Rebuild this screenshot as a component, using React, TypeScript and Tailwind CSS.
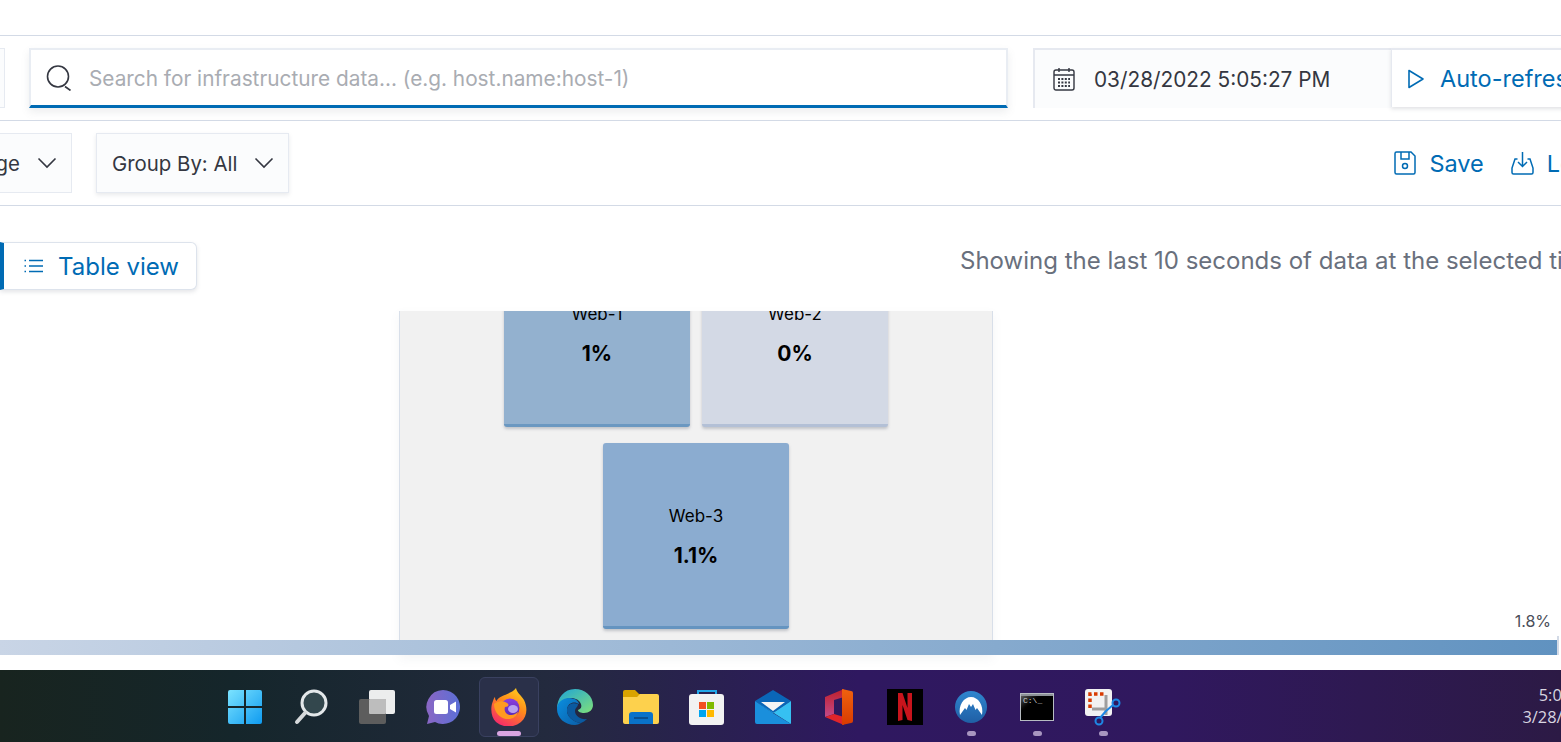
import type { ReactNode } from "react";

const Chevron = () => (
  <svg width="20" height="12" viewBox="0 0 20 12" fill="none" stroke="#343741" strokeWidth="1.6">
    <path d="M1.5 1.5 10 10l8.5-8.5" />
  </svg>
);

function Dropdown({ children }: { children: ReactNode }) {
  return (
    <div className="flex h-[60px] shrink-0 items-center gap-[17px] border border-[#e6eaf1] bg-[#fbfcfd] pr-[14px] text-[20.4px] text-[#343741] shadow-[0_2px_4px_rgba(105,112,125,0.15)]">
      {children}
      <Chevron />
    </div>
  );
}

function SearchBar() {
  return (
    <div className="flex h-[60px] w-[979px] items-center border-x-2 border-t-2 border-b-[3px] border-x-[#e9edf3] border-t-[#e9edf3] border-b-[#006bb4] bg-white pl-[15px] shadow-[0_4px_8px_rgba(105,112,125,0.12)]">
      <svg width="27" height="26" viewBox="0 0 27 26" fill="none" stroke="#343741" strokeWidth="1.6">
        <circle cx="12" cy="11.5" r="10.500" />
        <path d="M19 21.500l5.500 4" />
      </svg>
      <span className="ml-[16px] pt-[3px] text-[20.8px] whitespace-nowrap text-[#a9acb2]">
        Search for infrastructure data... (e.g. host.name:host-1)
      </span>
    </div>
  );
}

function DatePicker() {
  return (
    <div className="flex h-[60px] shrink-0">
      <div className="flex w-[358px] shrink-0 items-center border-t-2 border-l-2 border-[#e6e9f0] bg-[#fbfcfd] pl-[18px]">
        <svg width="22" height="24" viewBox="0 0 22 24" fill="none" stroke="#343741" strokeWidth="1.4">
          <rect x="1" y="3" width="20" height="20" rx="2" />
          <path d="M1 8h20M6 1v4M16 1v4" />
          <path strokeWidth="2" strokeDasharray="2 1.4" d="M5 12h12M5 15.5h12M5 19h12" />
        </svg>
        <span className="ml-[19px] pt-[2px] text-[20.8px] whitespace-nowrap text-[#343741]">03/28/2022 5:05:27 PM</span>
      </div>
      <div className="flex h-[59px] w-[200px] shrink-0 items-center border-t-2 border-l border-[#e6e9f0] bg-white pl-[15px] shadow-[0_2px_4px_rgba(105,112,125,0.2)]">
        <svg width="18" height="20" viewBox="0 0 18 20" fill="none" stroke="#006bb4" strokeWidth="1.6">
          <path d="M2 1.5v17L16 10z" strokeLinejoin="round" />
        </svg>
        <span className="ml-[15px] text-[23.500px] whitespace-nowrap text-[#006bb4]">Auto-refresh</span>
      </div>
    </div>
  );
}

function Toolbar() {
  return (
    <div className="flex h-[85px] items-center border-b border-[#d3dae6]">
      <div className="flex w-[72px] shrink-0 justify-end overflow-hidden">
        <Dropdown>
          <span className="pt-[2px] whitespace-nowrap">Metric: CPU usage</span>
        </Dropdown>
      </div>
      <div className="ml-[24px] shrink-0">
        <Dropdown>
          <span className="ml-[15px] pt-[2px] whitespace-nowrap">Group By: All</span>
        </Dropdown>
      </div>
      <div className="ml-[1105px] flex shrink-0 items-center text-[23.500px] text-[#006bb4]">
        <svg width="22" height="24" viewBox="0 0 22 24" fill="none" stroke="#006bb4" strokeWidth="1.5">
          <path d="M1 2.5A1.5 1.5 0 0 1 2.500 1H17l4 4v16.500a1.500 1.500 0 0 1-1.500 1.500h-17A1.500 1.500 0 0 1 1 21.500z" />
          <path d="M7 1v7h8V1" />
          <circle cx="11" cy="15" r="2.500" />
        </svg>
        <span className="ml-[13px] pt-[2px]">Save</span>
        <svg className="ml-[27px]" width="23" height="24" viewBox="0 0 23 24" fill="none" stroke="#006bb4" strokeWidth="1.5">
          <path d="M6.500 8H4L1 17v4.500A1.500 1.500 0 0 0 2.500 23h18a1.500 1.500 0 0 0 1.500-1.500V17l-3-9h-2.500" />
          <path d="M11.500 1v14M7 11l4.500 4.500L16 11" />
        </svg>
        <span className="ml-[13px] pt-[2px]">Load</span>
      </div>
    </div>
  );
}

function ViewRow() {
  return (
    <div className="flex h-[105px] items-start bg-white pt-[36px]">
      <div className="flex h-[48px] w-[197px] shrink-0 items-center rounded-r-[6px] border-y border-r border-[#dde3ec] border-l-[4px] border-l-[#006bb4] bg-white pl-[20px] shadow-[0_2px_4px_rgba(105,112,125,0.18)]">
        <svg width="20" height="16" viewBox="0 0 20 16" fill="none" stroke="#006bb4" strokeWidth="1.300">
          <path d="M5 2.500h14M5 8h14M5 13.500h14" />
          <path d="M0.500 2.500h1.500M0.500 8h1.500M0.500 13.500h1.500" />
        </svg>
        <span className="ml-[14px] pt-[1px] text-[24px] whitespace-nowrap text-[#006bb4]">Table view</span>
      </div>
      <span className="ml-[763px] pt-[1px] text-[24px] leading-[36px] whitespace-nowrap text-[#69707d]">
        Showing the last 10 seconds of data at the selected time
      </span>
    </div>
  );
}

function Tile({ name, value, bg, edge }: { name: string; value: string; bg: string; edge: string }) {
  return (
    <div className={`flex h-[186px] w-[186px] flex-col items-center rounded-[3px] border-b-[3px] pt-[62px] text-black shadow-[0_2px_3px_rgba(105,112,125,0.35)] ${bg} ${edge}`}>
      <span className="text-[17px] leading-[22px]">{name}</span>
      <span className="mt-[16px] text-[21px] leading-[26px] font-bold">{value}</span>
    </div>
  );
}

function WaffleMap() {
  return (
    <div className="relative flex h-[359px] bg-white">
      <div className="ml-[399px] h-[344px] w-[594px] shrink-0 overflow-hidden border-x border-[#d8dfe9] bg-[#f1f1f1] shadow-[0_4px_10px_rgba(105,112,125,0.07)]">
        <div className="mx-auto -mt-[70px] flex w-[400px] flex-wrap justify-center gap-x-[12px] gap-y-[16px]">
          <Tile name="Web-1" value="1%" bg="bg-[#93b1cf]" edge="border-[#6b98c1]" />
          <Tile name="Web-2" value="0%" bg="bg-[#d3d9e5]" edge="border-[#b3c0d6]" />
          <Tile name="Web-3" value="1.1%" bg="bg-[#8bacd0]" edge="border-[#6594c0]" />
        </div>
      </div>
      {/* legend sits on top of the panel */}
      <span className="absolute top-[300px] right-[10px] text-[16px] leading-[20px] text-[#4a4e59]">1.8%</span>
      <div className="absolute top-[329px] left-0 h-[15px] w-[1557px] bg-gradient-to-r from-[#c9d5e6] to-[#6092c0]" />
      <div className="absolute top-[325px] left-[1557px] h-[19px] w-[2px] bg-[#d3dae6]" />
    </div>
  );
}

function TaskIcon({ children, active, dot }: { children: ReactNode; active?: boolean; dot?: boolean }) {
  return (
    <div className="relative flex h-[72px] w-[66px] shrink-0 items-center justify-center pt-[2px]">
      {active && (
        <div className="absolute top-[7px] left-[3px] h-[60px] w-[60px] rounded-[6px] border border-[#3a4160] bg-[#2a3049]" />
      )}
      <div className="relative flex">{children}</div>
      {active && <div className="absolute top-[61px] left-[21px] h-[5px] w-[24px] rounded-full bg-[#d9a5e2]" />}
      {dot && <div className="absolute top-[61px] left-[29px] h-[5px] w-[9px] rounded-full bg-[#a896c0]" />}
    </div>
  );
}

const WindowsIcon = () => (
  <svg width="36" height="36" viewBox="0 0 36 36">
    <defs>
      <linearGradient id="win" x1="0" y1="0" x2="1" y2="1">
        <stop offset="0" stopColor="#7be3ff" />
        <stop offset="1" stopColor="#0f9bf0" />
      </linearGradient>
    </defs>
    <path fill="url(#win)" d="M1 3a2 2 0 0 1 2-2h14v16H1zM19 1h14a2 2 0 0 1 2 2v14H19zM1 19h16v16H3a2 2 0 0 1-2-2zM19 19h16v14a2 2 0 0 1-2 2H19z" />
  </svg>
);

const SearchIcon = () => (
  <svg width="34" height="36" viewBox="0 0 34 36" fill="none">
    <circle cx="20" cy="14" r="12" fill="#33474d" stroke="#e4e8ea" strokeWidth="3" />
    <path d="M11 24 3 33" stroke="#d6d9db" strokeWidth="4" strokeLinecap="round" />
  </svg>
);

const TaskViewIcon = () => (
  <svg width="36" height="34" viewBox="0 0 36 34">
    <rect x="10" y="0" width="26" height="24" rx="2" fill="#eceded" />
    <rect x="0" y="9" width="27" height="25" rx="2" fill="#5d5d5d" />
    <rect x="10" y="9" width="17" height="15" rx="1" fill="#bdbdbd" />
  </svg>
);

const ChatIcon = () => (
  <svg width="36" height="36" viewBox="0 0 36 36">
    <defs>
      <linearGradient id="chat" x1="0" y1="0" x2="1" y2="0">
        <stop offset="0" stopColor="#8a66c4" />
        <stop offset="1" stopColor="#5b6fd6" />
      </linearGradient>
    </defs>
    <path fill="url(#chat)" d="M18 1a17 17 0 1 1-8 32l-8 2 2-8A17 17 0 0 1 18 1z" />
    <rect x="9" y="11" width="14" height="14" rx="2.500" fill="#fff" />
    <path fill="#fff" d="M25 16l6-3.500v11L25 20z" />
  </svg>
);

const FirefoxIcon = () => (
  <svg width="36" height="38" viewBox="0 0 36 38">
    <defs>
      <linearGradient id="fx" x1="0.85" y1="0" x2="0.3" y2="1">
        <stop offset="0" stopColor="#ffd21f" />
        <stop offset="0.45" stopColor="#ff8a1a" />
        <stop offset="1" stopColor="#f52a6a" />
      </linearGradient>
      <linearGradient id="fxGlobe" x1="0.5" y1="0" x2="0.5" y2="1">
        <stop offset="0" stopColor="#8a3fe0" />
        <stop offset="1" stopColor="#5a28b0" />
      </linearGradient>
    </defs>
    <path fill="url(#fx)" d="M25 0c1 5 5 7 8 12 4 8 3 17-3 22-7 6-18 6-25 0C0 29-1 20 2 13c.5-1.500 1-3 2-4 0 2 .5 3 1.500 4 1-2 3-4 5-4.500C15 6 21 5 25 0z" />
    <circle cx="19" cy="20" r="9.500" fill="url(#fxGlobe)" />
    <path fill="#ff9a1f" d="M3 16c3-3 9-4 13-1 3 2 1 4-2 4-1 3 0 6 3 7.500 4 1.500 8 0 10-3-1 6-8 9-14 7C7 28 3 23 3 16z" />
    <ellipse cx="22" cy="21" rx="5" ry="4" fill="#b8a0f0" />
  </svg>
);

const EdgeIcon = () => (
  <svg width="36" height="36" viewBox="0 0 36 36">
    <defs>
      <linearGradient id="edgeTop" x1="0" y1="0" x2="1" y2="1">
        <stop offset="0" stopColor="#1ea3d8" />
        <stop offset="1" stopColor="#7fe07a" />
      </linearGradient>
      <linearGradient id="edgeLow" x1="0" y1="0" x2="1" y2="1">
        <stop offset="0" stopColor="#0a8fe0" />
        <stop offset="1" stopColor="#0b5ea8" />
      </linearGradient>
    </defs>
    <path fill="url(#edgeTop)" d="M18 0c10 0 18 7 18 16 0 5-4 8-9 8-3 0-6-1-6-3 3-1 4-3 3-6C22 9 13 7 7 11 3 14 1 17 0 20 0 9 7 0 18 0z" />
    <path fill="url(#edgeLow)" d="M0 20C0 13 6 9 12 9c7 0 10 4 10 6-4-3-11-2-12 5-1 7 6 13 14 14-2 1-4 2-6 2C8 36 0 29 0 20z" />
    <path fill="#0b5aa0" d="M10 20c1-5 6-7 11-5 0 3-3 4-3 7 0 5 6 9 12 8-2 2-4 3-6 4-8-1-15-7-14-14z" />
  </svg>
);

const FolderIcon = () => (
  <svg width="36" height="34" viewBox="0 0 36 34">
    <path fill="#d9a300" d="M0 2a2 2 0 0 1 2-2h10l4 4h18v8H0z" />
    <path fill="#fdd14d" d="M0 7h14l3-3h17a2 2 0 0 1 2 2v26a2 2 0 0 1-2 2H2a2 2 0 0 1-2-2z" />
    <path fill="#0a72c9" d="M6 34V25a3 3 0 0 1 3-3h18a3 3 0 0 1 3 3v9z" />
    <rect x="11" y="27" width="14" height="2" fill="#0a4f8f" />
  </svg>
);

const StoreIcon = () => (
  <svg width="36" height="36" viewBox="0 0 36 36">
    <path fill="none" stroke="#22a7e8" strokeWidth="2" d="M9 7V2h18v5" />
    <rect x="0" y="5" width="35" height="31" rx="3" fill="#f2f2f2" />
    <rect x="10" y="13" width="7" height="7" fill="#f25022" />
    <rect x="18" y="13" width="7" height="7" fill="#7fba00" />
    <rect x="10" y="21" width="7" height="7" fill="#00a4ef" />
    <rect x="18" y="21" width="7" height="7" fill="#ffb900" />
  </svg>
);

const MailIcon = () => (
  <svg width="36" height="34" viewBox="0 0 36 34">
    <path fill="#0a66b8" d="M0 11 18 0l18 11-18 12z" />
    <path fill="#f4f4f4" d="M6 12h24L18 21z" />
    <path fill="#36c0f2" d="M0 11l18 12 18-12v23z" />
    <path fill="#1a8fdc" d="M0 11v21a2 2 0 0 0 2 2h34L18 23z" />
  </svg>
);

const OfficeIcon = () => (
  <svg width="28" height="36" viewBox="0 0 28 36">
    <defs>
      <linearGradient id="ofc" x1="0" y1="0" x2="0" y2="1">
        <stop offset="0" stopColor="#f0620f" />
        <stop offset="1" stopColor="#d83b01" />
      </linearGradient>
      <linearGradient id="ofcLeft" x1="0" y1="0" x2="0" y2="1">
        <stop offset="0" stopColor="#c01f2a" />
        <stop offset="1" stopColor="#c24a8a" />
      </linearGradient>
    </defs>
    <path fill="url(#ofcLeft)" d="M0 8 19 0v8L9 11v14L0 28z" />
    <path fill="#e0252b" d="M0 28l9-3 10 3v8z" />
    <path fill="url(#ofc)" d="M17 0l9 2a2 2 0 0 1 2 2v28a2 2 0 0 1-2 2l-9 2z" />
  </svg>
);

const NetflixIcon = () => (
  <div className="flex h-[36px] w-[36px] items-center justify-center bg-black">
    <svg width="14" height="28" viewBox="0 0 14 28">
      <path fill="#c8141c" d="M0 0h4.500L9.500 15V0H14v28l-4.500-1L4.500 12v15L0 28z" />
    </svg>
  </div>
);

const NordIcon = () => (
  <svg width="32" height="32" viewBox="0 0 32 32">
    <defs>
      <linearGradient id="nord" x1="0" y1="0" x2="0" y2="1">
        <stop offset="0" stopColor="#2f86cf" />
        <stop offset="1" stopColor="#1f5fa5" />
      </linearGradient>
    </defs>
    <circle cx="16" cy="16" r="16" fill="url(#nord)" />
    <path fill="#fff" d="M5 24C3 14 9 6 16 6s13 8 11 18l-5-7-1.500 2-2.500-6-2 3-2-3-2.500 6-1.500-2z" />
  </svg>
);

const CmdIcon = () => (
  <div className="flex h-[28px] w-[34px] flex-col border border-[#b7bcc2] bg-gradient-to-br from-[#6a6a6a] via-black via-40% to-black">
    <div className="h-[2px] bg-[#8d9298]" />
    <span className="pl-[2px] font-['Liberation_Mono',monospace] text-[8px] leading-[9px] text-[#d0d0d0]">C:\_</span>
  </div>
);

const SnipIcon = () => (
  <svg width="37" height="37" viewBox="0 0 37 37">
    <rect x="0" y="0" width="27" height="27" rx="3" fill="#f2f2f2" />
    <path fill="none" stroke="#d83b01" strokeWidth="3.500" strokeDasharray="3.500 2.500" d="M5 19V5h14" />
    <path fill="none" stroke="#9e9e9e" strokeWidth="3" d="M7 20h14M21 6v20" />
    <path fill="none" stroke="#1e88e5" strokeWidth="2" d="M21 22l7-6M21 22l-6 7" />
    <circle cx="31" cy="14" r="3.500" fill="none" stroke="#1e88e5" strokeWidth="2" />
    <circle cx="14" cy="32" r="3.500" fill="none" stroke="#1e88e5" strokeWidth="2" />
  </svg>
);

function Taskbar() {
  return (
    <div className="flex h-[72px] overflow-hidden bg-[linear-gradient(90deg,#18241f_0%,#15262b_15%,#232a3e_35%,#2f1860_55%,#30185e_75%,#2c1a45_100%)] pl-[212px]">
      <TaskIcon><WindowsIcon /></TaskIcon>
      <TaskIcon><SearchIcon /></TaskIcon>
      <TaskIcon><TaskViewIcon /></TaskIcon>
      <TaskIcon><ChatIcon /></TaskIcon>
      <TaskIcon active><FirefoxIcon /></TaskIcon>
      <TaskIcon><EdgeIcon /></TaskIcon>
      <TaskIcon><FolderIcon /></TaskIcon>
      <TaskIcon><StoreIcon /></TaskIcon>
      <TaskIcon><MailIcon /></TaskIcon>
      <TaskIcon><OfficeIcon /></TaskIcon>
      <TaskIcon><NetflixIcon /></TaskIcon>
      <TaskIcon dot><NordIcon /></TaskIcon>
      <TaskIcon dot><CmdIcon /></TaskIcon>
      <TaskIcon dot><SnipIcon /></TaskIcon>
      <div className="ml-[386px] flex w-[78px] shrink-0 flex-col items-end pt-[14px] font-['Open_Sans',sans-serif] text-[16.4px] leading-[22px] text-[#d8d5e0]">
        <span className="whitespace-nowrap">5:05 PM</span>
        <span className="whitespace-nowrap">3/28/2022</span>
      </div>
    </div>
  );
}

export default function App() {
  return (
    <div className="h-[742px] w-[1561px] overflow-hidden bg-white font-['Inter',sans-serif]">
      <div className="h-[36px] border-b border-[#d3dae6]" />
      <div className="flex h-[85px] items-start border-b border-[#d3dae6] pt-[12px]">
        <div className="h-[60px] w-[5px] shrink-0 border-y border-r border-[#e6eaf1] bg-[#fbfcfd]" />
        <div className="ml-[24px] shrink-0">
          <SearchBar />
        </div>
        <div className="ml-[25px] shrink-0">
          <DatePicker />
        </div>
      </div>
      <Toolbar />
      <ViewRow />
      <WaffleMap />
      <Taskbar />
    </div>
  );
}
